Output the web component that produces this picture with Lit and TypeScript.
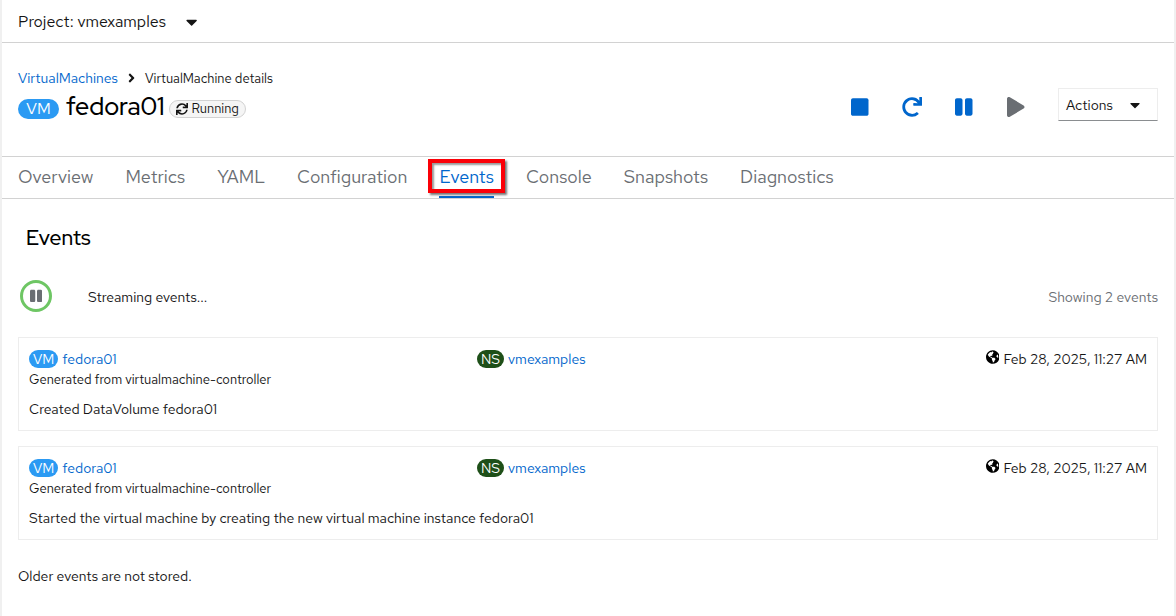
import { LitElement, html, css, svg } from "lit";
import { customElement, property } from "lit/decorators.js";

const ICONS: Record<string, { box: string; d: string }> = {
  caret: {
    box: "0 0 320 512",
    d: "M31.3 192h257.3c17.8 0 26.7 21.5 14.1 34.1L174.1 354.8c-7.8 7.8-20.5 7.8-28.3 0L17.2 226.1C4.6 213.5 13.5 192 31.3 192z",
  },
  angle: {
    box: "0 0 256 512",
    d: "M224.3 273l-136 136c-9.4 9.4-24.6 9.4-33.9 0l-22.6-22.6c-9.4-9.4-9.4-24.6 0-33.9l96.4-96.4-96.4-96.4c-9.4-9.4-9.4-24.6 0-33.9L54.3 103c9.4-9.4 24.6-9.4 33.9 0l136 136c9.5 9.4 9.5 24.6.1 34z",
  },
  sync: {
    box: "0 0 512 512",
    d: "M440.65 12.57l4 82.77A247.16 247.16 0 0 0 255.83 8C134.73 8 33.91 94.92 12.29 209.82A12 12 0 0 0 24.09 224h49.05a12 12 0 0 0 11.67-9.26 175.91 175.91 0 0 1 317-56.94l-101.46-4.86a12 12 0 0 0-12.57 12v47.41a12 12 0 0 0 12 12H500a12 12 0 0 0 12-12V12a12 12 0 0 0-12-12h-47.37a12 12 0 0 0-11.98 12.57zM255.83 432a175.61 175.61 0 0 1-146-77.8l101.8 4.87a12 12 0 0 0 12.57-12v-47.4a12 12 0 0 0-12-12H12a12 12 0 0 0-12 12V500a12 12 0 0 0 12 12h47.35a12 12 0 0 0 12-12.6l-4.15-82.57A247.17 247.17 0 0 0 255.83 504c121.11 0 221.93-86.92 243.55-201.82a12 12 0 0 0-11.8-14.18h-49.05a12 12 0 0 0-11.67 9.26A175.86 175.86 0 0 1 255.83 432z",
  },
  stop: {
    box: "0 0 448 512",
    d: "M400 32H48C21.5 32 0 53.5 0 80v352c0 26.5 21.5 48 48 48h352c26.5 0 48-21.5 48-48V80c0-26.5-21.5-48-48-48z",
  },
  redo: {
    box: "0 0 512 512",
    d: "M500.33 0h-47.41a12 12 0 0 0-12 12.57l4 82.76A247.42 247.42 0 0 0 256 8C119.34 8 7.9 119.53 8 256.19 8.1 393.07 119.1 504 256 504a247.1 247.1 0 0 0 166.18-63.91 12 12 0 0 0 .48-17.43l-34-34a12 12 0 0 0-16.38-.55A176 176 0 1 1 402.1 157.8l-101.53-4.87a12 12 0 0 0-12.57 12v47.41a12 12 0 0 0 12 12h200.33a12 12 0 0 0 12-12V12a12 12 0 0 0-12-12z",
  },
  pause: {
    box: "0 0 448 512",
    d: "M144 479H48c-26.5 0-48-21.5-48-48V79c0-26.5 21.5-48 48-48h96c26.5 0 48 21.5 48 48v352c0 26.5-21.5 48-48 48zm304-48V79c0-26.5-21.5-48-48-48h-96c-26.5 0-48 21.5-48 48v352c0 26.5 21.5 48 48 48h96c26.5 0 48-21.5 48-48z",
  },
  play: {
    box: "0 0 448 512",
    d: "M424.4 214.7L72.4 6.6C43.8-10.3 0 6.1 0 47.9V464c0 37.5 40.7 60.1 72.4 41.3l352-208c31.4-18.5 31.5-64.1 0-82.6z",
  },
  globe: {
    box: "0 0 496 512",
    d: "M248 8C111.03 8 0 119.03 0 256s111.03 248 248 248 248-111.03 248-248S384.97 8 248 8zm82.29 357.6c-3.9 3.88-7.99 7.95-11.31 11.28-2.99 3-5.1 6.7-6.17 10.71-1.51 5.66-2.73 11.38-4.77 16.87l-17.39 46.85c-13.76 3-28 4.69-42.65 4.69v-27.38c1.69-12.62-7.64-36.26-22.63-51.25-6-6-9.37-14.14-9.37-22.63v-32.01c0-11.64-6.27-22.34-16.46-27.97-14.37-7.95-34.81-19.06-48.81-26.11-11.48-5.78-22.1-13.14-31.65-21.75l-.8-.72a114.792 114.792 0 0 1-18.06-20.74c-9.38-13.77-24.66-36.42-34.59-51.14 20.47-45.5 57.36-82.04 103.2-101.89l24.01 12.01C203.48 89.74 216 82.01 216 70.11v-11.3c7.99-1.29 16.12-2.11 24.39-2.42l28.3 28.3c6.25 6.25 6.25 16.38 0 22.63L264 112l-10.34 10.34c-3.12 3.12-3.12 8.19 0 11.31l4.69 4.69c3.12 3.12 3.12 8.19 0 11.31l-8 8a8.008 8.008 0 0 1-5.66 2.34h-8.99c-2.08 0-4.08.81-5.58 2.27l-9.92 9.65a8.008 8.008 0 0 0-1.58 9.31l15.59 31.19c2.66 5.32-1.21 11.58-7.15 11.58h-5.64c-1.93 0-3.79-.7-5.24-1.96l-9.28-8.06a16.017 16.017 0 0 0-15.55-3.1l-31.17 10.39a11.95 11.95 0 0 0-8.17 11.34c0 4.53 2.56 8.66 6.61 10.69l11.08 5.54c9.41 4.71 19.79 7.16 30.31 7.16s22.59 27.29 32 32h66.75c8.49 0 16.62 3.37 22.63 9.37l13.69 13.69a30.503 30.503 0 0 1 8.93 21.57 46.536 46.536 0 0 1-13.72 32.98zM417 274.25c-5.79-1.45-10.84-5-14.15-9.97l-17.98-26.97a23.97 23.97 0 0 1 0-26.62l19.59-29.38c2.32-3.47 5.5-6.29 9.24-8.15l12.98-6.49C440.2 193.59 448 223.87 448 256c0 8.67-.74 17.16-1.82 25.54L417 274.25z",
  },
};

const icon = (name: string) =>
  html`<svg class="icon ${name}" viewBox=${ICONS[name].box} aria-hidden="true">${svg`<path d=${ICONS[name].d}></path>`}</svg>`;

const shared = css`
  * {
    box-sizing: border-box;
    margin: 0;
  }
  a {
    color: #0066cc;
    text-decoration: none;
  }
  button {
    font: inherit;
    color: inherit;
    background: none;
    border: 0;
    padding: 0;
    display: inline-flex;
    align-items: center;
    cursor: pointer;
  }
  .icon {
    display: block;
    flex: none;
    fill: currentColor;
    height: 14px;
  }
  .badge {
    flex: none;
    border-radius: 20px;
    color: #fff;
    text-align: center;
    background: #2b9af3;
  }
`;

@customElement("event-card")
export class EventCard extends LitElement {
  @property() message = "";

  static styles = [
    shared,
    css`
      :host {
        display: block;
        border: 1px solid #ededed;
        padding: 11px 10px;
        line-height: 20px;
      }
      .head {
        display: grid;
        grid-template-columns: 2fr 2fr 1fr;
        column-gap: 4px;
      }
      .ref,
      .time {
        display: flex;
        align-items: center;
      }
      .ref {
        gap: 4px;
      }
      .badge {
        min-width: 29px;
        padding: 0 4px;
        line-height: 18px;
      }
      .ns {
        min-width: 27px;
        background: #1e4f18;
      }
      .time {
        gap: 4px;
        justify-content: flex-end;
        white-space: nowrap;
      }
      .globe {
        margin-bottom: 4px;
        fill: #000;
      }
      .source {
        padding-top: 1px;
        font-size: 13px;
      }
      .message {
        margin-top: 9px;
      }
    `,
  ];

  render() {
    return html`
      <div class="head">
        <div class="ref"><span class="badge">VM</span><a href="#vm">fedora01</a></div>
        <div class="ref"><span class="badge ns">NS</span><a href="#ns">vmexamples</a></div>
        <div class="time">${icon("globe")}<time datetime="2025-02-28T11:27">Feb 28, 2025, 11:27 AM</time></div>
      </div>
      <p class="source">Generated from virtualmachine-controller</p>
      <p class="message">${this.message}</p>
    `;
  }
}

@customElement("app-root")
export class AppRoot extends LitElement {
  private tabs = ["Overview", "Metrics", "YAML", "Configuration", "Events", "Console", "Snapshots", "Diagnostics"];
  private events = [
    "Created DataVolume fedora01",
    "Started the virtual machine by creating the new virtual machine instance fedora01",
  ];

  static styles = [
    shared,
    css`
      :host {
        display: block;
        box-sizing: border-box;
        min-height: 100vh;
        border: solid #f0f0f0;
        border-width: 0 2px;
        background: #fff;
        color: #151515;
        font: 14px/20px "Red Hat Text", Roboto, sans-serif;
      }
      .project {
        display: flex;
        padding: 2px 16px 0;
        height: 43px;
        border-bottom: 1px solid #d2d2d2;
        font-size: 16px;
      }
      .project button {
        gap: 20px;
      }
      .project .icon {
        height: 18px;
      }
      .header {
        padding: 25px 16px 35px;
        display: grid;
        grid-template-columns: 1fr auto;
      }
      .crumbs {
        grid-column: 1 / -1;
        display: flex;
        align-items: center;
        gap: 10px;
      }
      .crumbs span {
        padding-top: 1px;
        font-size: 13px;
        line-height: 19px;
      }
      .title {
        display: flex;
        align-items: center;
        gap: 4px;
        height: 33px;
        padding-top: 8px;
      }
      .title .badge {
        width: 41px;
        font-size: 16px;
      }
      h1 {
        padding: 0 0 4px 3px;
        color: #000;
        font-family: "Red Hat Display", "Red Hat Text", Roboto, sans-serif;
        font-size: 25px;
        font-weight: 500;
        line-height: 32px;
      }
      .status {
        display: flex;
        align-items: center;
        gap: 4px;
        height: 18px;
        padding: 0 6px;
        border: 1px solid #d2d2d2;
        border-radius: 10px;
        background: #f5f5f5;
        font-size: 13px;
      }
      .status .icon {
        height: 12px;
      }
      .actions {
        display: flex;
        align-items: center;
        gap: 32px;
        color: #0066cc;
      }
      .actions .glyph {
        width: 20px;
        height: 24px;
        justify-content: center;
        align-items: flex-end;
      }
      .actions .icon {
        height: 20px;
      }
      .actions .off {
        color: #6a6e73;
      }
      .actions .menu {
        height: 33px;
        width: 100px;
        padding: 0 17px 0 7px;
        justify-content: space-between;
        color: #151515;
        border: 1px solid #ededed;
        border-bottom-color: #8a8d90;
      }
      .actions .caret {
        height: 16px;
      }
      .tabs {
        display: flex;
        gap: 32px;
        padding: 0 16px;
        border: solid #d2d2d2;
        border-width: 1px 0;
        font-size: 18px;
      }
      .tabs a {
        position: relative;
        color: #6a6e73;
        line-height: 39px;
        border-bottom: 2px solid transparent;
      }
      .tabs .current {
        color: #0066cc;
        border-color: #0066cc;
      }
      .mark {
        position: absolute;
        inset: 2px -11px 3px;
        border: 4px solid #fb0007;
        box-shadow: 2px 2px 2px #777, inset 2px 2px 2px #999;
      }
      .body {
        padding: 24px 16px;
      }
      h2 {
        padding: 0 8px;
        font-family: "Red Hat Display", "Red Hat Text", Roboto, sans-serif;
        font-size: 21px;
        font-weight: 500;
        line-height: 30px;
        color: #000;
      }
      .stream {
        display: flex;
        align-items: center;
        padding: 27px 0 25px 2px;
      }
      .toggle {
        width: 32px;
        height: 32px;
        justify-content: center;
        border: 3px solid #6ec664;
        border-radius: 50%;
        color: #6a6e73;
      }
      .stream p,
      .count {
        padding-top: 2px;
      }
      .stream p {
        flex: 1;
        margin-left: 36px;
      }
      .count {
        color: #6a6e73;
      }
      .list {
        display: grid;
        gap: 15px;
      }
      .older {
        margin-top: 26px;
      }
    `,
  ];

  render() {
    return html`
      <div class="project"><button type="button">Project: vmexamples ${icon("caret")}</button></div>
      <header class="header">
        <nav class="crumbs" aria-label="Breadcrumb">
          <a href="#list">VirtualMachines</a>${icon("angle")}<span>VirtualMachine details</span>
        </nav>
        <div class="title">
          <span class="badge">VM</span>
          <h1>fedora01</h1>
          <span class="status">${icon("sync")}Running</span>
        </div>
        <div class="actions">
          <button type="button" class="glyph" aria-label="Stop">${icon("stop")}</button>
          <button type="button" class="glyph" aria-label="Restart">${icon("redo")}</button>
          <button type="button" class="glyph" aria-label="Pause">${icon("pause")}</button>
          <button type="button" class="glyph off" aria-label="Start" disabled>${icon("play")}</button>
          <button type="button" class="menu">Actions ${icon("caret")}</button>
        </div>
      </header>
      <nav class="tabs" aria-label="Details">
        ${this.tabs.map((t) =>
          t === "Events"
            ? html`<a class="current" href="#events" aria-current="page">${t}<span class="mark"></span></a>`
            : html`<a href="#${t.toLowerCase()}">${t}</a>`
        )}
      </nav>
      <main class="body">
        <h2>Events</h2>
        <div class="stream">
          <button type="button" class="toggle" aria-label="Pause stream">${icon("pause")}</button>
          <p>Streaming events...</p>
          <span class="count">Showing 2 events</span>
        </div>
        <div class="list">${this.events.map((m) => html`<event-card .message=${m}></event-card>`)}</div>
        <p class="older">Older events are not stored.</p>
      </main>
    `;
  }
}
